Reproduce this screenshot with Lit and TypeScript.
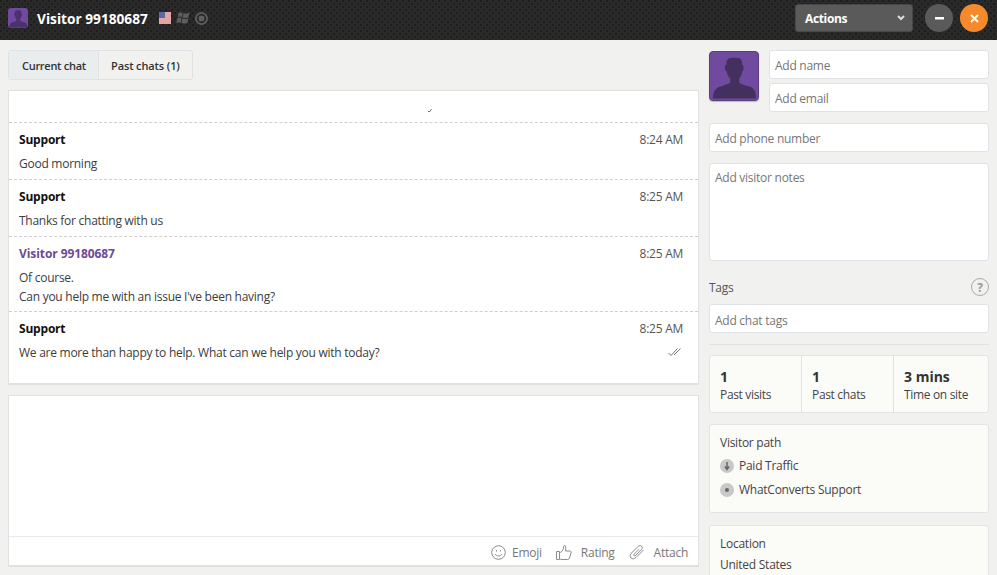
import { LitElement, html, css, svg } from "lit";
import { customElement } from "lit/decorators.js";

const messages = [
  { who: "Support", time: "8:24 AM", lines: ["Good morning"] },
  { who: "Support", time: "8:25 AM", lines: ["Thanks for chatting with us"] },
  { who: "Visitor 99180687", time: "8:25 AM", lines: ["Of course.", "Can you help me with an issue I've been having?"], visitor: true },
  { who: "Support", time: "8:25 AM", lines: ["We are more than happy to help. What can we help you with today?"], read: true },
];

const silhouette = svg`<path d="M38 14c6-3 20-3 25 0 3 2 4 6 4 12 2 1 3 3 3 6 0 4-1 8-3 9-1 6-3 11-6 14v9c6 4 14 6 24 9 4 2 7 5 9 10 1 4 2 9 2 14H6c0-6 1-11 3-15 2-4 5-7 10-9 9-3 17-5 23-9v-9c-3-3-6-8-7-14-2-1-4-5-4-9 0-3 1-5 3-6 0-6 1-10 4-12z"/>`;

@customElement("app-root")
export class AppRoot extends LitElement {
  static styles = css`
    :host { display: block; width: 997px; height: 575px; overflow: hidden; background: #f1f1ef; font-family: "Open Sans", "Noto Sans", sans-serif; font-size: 12px; letter-spacing: -0.26px; color: #444; }
    * { box-sizing: border-box; }
    .top { height: 40px; background-color: #2a2a2a; background-image: radial-gradient(circle at 1px 1px, #1e1e1e 0.8px, transparent 1px), radial-gradient(circle at 4px 4px, #1e1e1e 0.8px, transparent 1px); background-size: 6px 6px; display: flex; align-items: center; padding: 0 9px 4px 8px; color: #fff; }
    .av-s { width: 20px; height: 20px; border-radius: 3px; background: #6f4a9e; fill: #4b3170; display: block; margin-right: 9px; }
    .title { font-weight: 700; font-size: 13.7px; margin-right: 11px; letter-spacing: 0; }
    .ico { display: block; }
    .flag { margin-right: 5px; }
    .win { margin-right: 5px; }
    .spacer { flex: 1; }
    .actions { width: 118px; height: 28px; border-radius: 3px; background: #5a5a5a; border: 1px solid #484848; display: flex; align-items: center; justify-content: space-between; padding: 0 7px 0 9px; font-weight: 700; font-size: 12px; letter-spacing: -0.35px; margin-right: 12px; }
    .round { width: 28px; height: 28px; border-radius: 50%; background: #5a5a5a; display: flex; align-items: center; justify-content: center; }
    .round.close { background: #f58a2c; margin-left: 7px; }
    .main { display: flex; padding: 10px 8px 0; gap: 10px; }
    .left { width: 691px; flex: none; display: flex; flex-direction: column; }
    .right { width: 280px; flex: none; display: flex; flex-direction: column; }
    .tabs { display: flex; width: 185px; height: 30px; border: 1px solid #dfe1e3; border-radius: 3px; margin-bottom: 10px; font-weight: 600; font-size: 11px; letter-spacing: -0.12px; color: #333; }
    .tab { display: flex; align-items: center; padding-left: 12px; }
    .tab.on { width: 90px; background: #eaedee; border-right: 1px solid #dfe1e3; padding-left: 13px; letter-spacing: -0.28px; }
    .chat { height: 295px; background: #fff; border: 1px solid #e1e1e1; border-bottom-width: 2px; margin-bottom: 10px; }
    .stub { height: 31px; position: relative; }
    .tick { position: absolute; left: 419px; top: 18px; }
    .msg { border-top: 1px dashed #cfcfcf; padding: 7px 15px 0 10px; height: 57px; position: relative; }
    .msg.two { height: 75px; }
    .msg.last { height: 72px; }
    .head { display: flex; justify-content: space-between; line-height: 20px; height: 20px; margin-bottom: 4px; }
    .who { font-weight: 700; color: #111; letter-spacing: -0.2px; }
    .who.v { color: #6c4a94; letter-spacing: -0.08px; }
    .time { color: #555; }
    .line { line-height: 19px; color: #3c3c3c; }
    .check { position: absolute; right: 17px; top: 36px; }
    .composer { height: 172px; background: #fff; border: 1px solid #e1e1e1; border-bottom-width: 2px; display: flex; flex-direction: column; }
    .grow { flex: 1; }
    .tools { height: 29px; border-top: 1px solid #e6ecec; display: flex; justify-content: flex-end; align-items: center; padding: 2px 10px 0 0; color: #777; letter-spacing: -0.25px; gap: 14px; }
    .tool { display: flex; align-items: center; gap: 9px; }
    .tool.tight { gap: 6px; }
    .tool svg { display: block; fill: none; stroke: #8c8c8c; stroke-width: 1; }
    .idrow { display: flex; gap: 10px; margin-bottom: 11px; }
    .bigav { width: 50px; height: 50px; border-radius: 4px; background: #6f4a9e; fill: #43305f; border: 1px solid #5a3f80; box-shadow: 0 1px 1px #bbb; flex: none; display: block; margin-top: 1px; }
    .idcol { flex: 1; display: flex; flex-direction: column; gap: 4px; }
    .field { height: 29px; background: #fff; border: 1px solid #e0e2e5; border-radius: 3px; display: flex; align-items: center; padding: 1px 0 0 5px; color: #777; }
    .field.tagf { padding-top: 3px; }
    .field.notes { height: 98px; align-items: flex-start; padding-top: 5px; margin: 11px 0 16px; }
    .taghead { display: flex; justify-content: space-between; align-items: center; height: 20px; margin-bottom: 7px; color: #555; }
    .help { width: 18px; height: 18px; border: 1.5px solid #aaa; border-radius: 50%; color: #999; display: flex; align-items: center; justify-content: center; font-weight: 700; font-size: 12px; letter-spacing: 0; }
    .rule { height: 2px; border-top: 1px solid #dfe1e4; margin: 11px 0 9px; }
    .stats { height: 58px; display: flex; background: #fbfbf8; border: 1px solid #e3e4e6; border-radius: 3px; margin-bottom: 11px; }
    .stat { width: 92px; flex: none; padding: 11px 0 0 10px; border-right: 1px solid #e0e1e5; }
    .stat:last-child { border-right: none; flex: 1; }
    .num { font-weight: 700; font-size: 14px; line-height: 20px; color: #333; letter-spacing: 0; }
    .lab { line-height: 16px; color: #444; letter-spacing: -0.33px; }
    .card { background: #fbfbf8; border: 1px solid #e3e4e6; border-radius: 3px; padding: 8px 10px 0; }
    .card.path { height: 89px; margin-bottom: 12px; }
    .card.loc { height: 80px; }
    .cardline { line-height: 20px; color: #444; }
    .cardline + .cardline { margin-top: 1px; }
    .pathrow { display: flex; align-items: center; gap: 5px; line-height: 20px; margin-top: 4px; color: #444; }
    .cardline + .pathrow { margin-top: 3px; }
    .pathrow svg { display: block; flex: none; }
  `;

  private msg(m: any) {
    const cls = "msg" + (m.lines.length > 1 ? " two" : "") + (m.read ? " last" : "");
    return html`<div class=${cls}>
      <div class="head"><span class="who ${m.visitor ? "v" : ""}">${m.who}</span><span class="time">${m.time}</span></div>
      ${m.lines.map((l: string) => html`<div class="line">${l}</div>`)}
      ${m.read ? html`<svg class="check" width="13" height="9" viewBox="0 0 13 9" fill="none" stroke="#777"><path d="M.5 5l2.500 2.500L9.500.5M6 7L12.500.5"/></svg>` : ""}
    </div>`;
  }

  render() {
    return html`
      <div class="top">
        <svg class="av-s" viewBox="0 0 100 100">${silhouette}</svg>
        <span class="title">Visitor 99180687</span>
        <svg class="ico flag" width="12" height="12" viewBox="0 0 12 12"><rect width="12" height="12" fill="#f4f0f0"/><path d="M0 1h12M0 3h12M0 5h12M0 7h12M0 9h12M0 11h12" stroke="#d65a5a"/><rect width="6" height="6" fill="#5a6aa8"/></svg>
        <svg class="ico win" width="14" height="12" viewBox="0 0 14 12" fill="#5e5e5e"><path d="M2.500 1c1.500-.6 2.800-.6 4.200 0L5.800 5.300c-1.400-.6-2.800-.6-4.200 0zM7.500 1.200c1.500.6 3.800.6 6-.6l-1 4.600c-2 1-4.200 1-5.900.4zM1.400 6.300c1.400-.6 2.800-.6 4.200 0l-.9 4.600c-1.500-.6-3-.5-4.500.1zM6.400 6.600c1.700.6 3.900.6 5.900-.4l-.9 4.500c-2 1-4.200 1.100-5.900.4z"/></svg>
        <svg class="ico" width="13" height="13" viewBox="0 0 13 13"><circle cx="6.500" cy="6.500" r="5.600" fill="none" stroke="#5e5e5e" stroke-width="1.800"/><circle cx="6.500" cy="6.500" r="3" fill="#5e5e5e"/></svg>
        <span class="spacer"></span>
        <div class="actions"><span>Actions</span><svg width="8" height="6" viewBox="0 0 8 6" fill="none" stroke="#ddd" stroke-width="2"><path d="M1 1l3 3 3-3"/></svg></div>
        <div class="round"><svg width="9" height="3"><rect width="9" height="2.500" fill="#fff"/></svg></div>
        <div class="round close"><svg width="9" height="9" viewBox="0 0 9 9" stroke="#fff" stroke-width="2"><path d="M1 1l7 7M8 1l-7 7"/></svg></div>
      </div>
      <div class="main">
        <div class="left">
          <div class="tabs"><div class="tab on">Current chat</div><div class="tab">Past chats (1)</div></div>
          <div class="chat">
            <div class="stub"><svg class="tick" width="4" height="3" viewBox="0 0 4 3" fill="none" stroke="#777"><path d="M0 2.500h2L3.500 0"/></svg></div>
            ${messages.map((m) => this.msg(m))}
          </div>
          <div class="composer">
            <div class="grow"></div>
            <div class="tools">
              <div class="tool tight"><svg width="15" height="15" viewBox="0 0 15 15"><circle cx="7.500" cy="7.500" r="6.800"/><path d="M4 9c1 2.500 6 2.500 7 0M5.500 5v1.500M9.500 5v1.500"/></svg>Emoji</div>
              <div class="tool"><svg width="16" height="15" viewBox="0 0 16 15"><path d="M.5 6.500h3v8h-3zM3.500 7.500c2 0 3.500-2 4-4.500.3-1.500 0-2.500 1-2.500 1.500 0 1.500 2 1 5.500h4.500c1 0 1.500 1 1 2l-1.500 5c-.3 1-1 1.500-2 1.500H6c-1 0-1.500-.5-2.500-.5"/></svg>Rating</div>
              <div class="tool"><svg width="16" height="16" viewBox="0 0 16 16"><path d="M14.500 6l-7.500 7.500c-1.600 1.600-3.800 1.700-5 .5s-1.100-3.400.5-5L9 2.500c1.100-1.100 2.700-1.200 3.600-.3s.8 2.500-.3 3.600L6.600 11.500c-.5.500-1.200.6-1.600.2s-.3-1.100.2-1.600l5-5"/></svg>Attach</div>
            </div>
          </div>
        </div>
        <div class="right">
          <div class="idrow">
            <svg class="bigav" viewBox="0 0 100 100">${silhouette}</svg>
            <div class="idcol"><div class="field">Add name</div><div class="field">Add email</div></div>
          </div>
          <div class="field">Add phone number</div>
          <div class="field notes">Add visitor notes</div>
          <div class="taghead"><span>Tags</span><span class="help">?</span></div>
          <div class="field tagf">Add chat tags</div>
          <div class="rule"></div>
          <div class="stats">
            <div class="stat"><div class="num">1</div><div class="lab">Past visits</div></div>
            <div class="stat"><div class="num">1</div><div class="lab">Past chats</div></div>
            <div class="stat"><div class="num">3 mins</div><div class="lab">Time on site</div></div>
          </div>
          <div class="card path">
            <div class="cardline">Visitor path</div>
            <div class="pathrow"><svg width="14" height="14" viewBox="0 0 14 14"><circle cx="7" cy="7" r="7" fill="#c9c9c9"/><path d="M7 3v7M4.800 7.500L7 10.500l2.200-3" fill="none" stroke="#666" stroke-width="1.500"/></svg>Paid Traffic</div>
            <div class="pathrow"><svg width="14" height="14" viewBox="0 0 14 14"><circle cx="7" cy="7" r="7" fill="#c9c9c9"/><circle cx="7" cy="7" r="2" fill="#666"/></svg>WhatConverts Support</div>
          </div>
          <div class="card loc">
            <div class="cardline">Location</div>
            <div class="cardline">United States</div>
          </div>
        </div>
      </div>
    `;
  }
}
